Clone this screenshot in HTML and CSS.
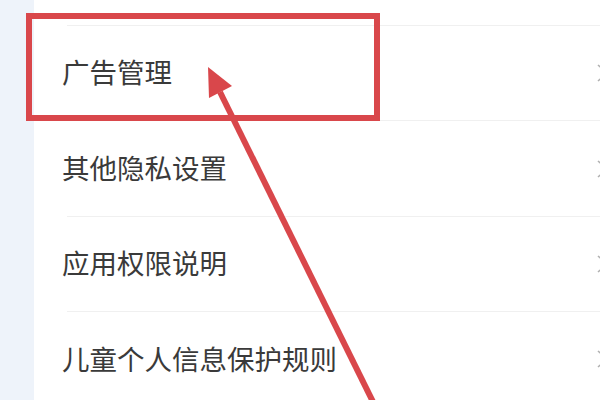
FILE: index.html
```html
<!DOCTYPE html>
<html lang="zh-CN">
<head>
    <meta charset="UTF-8">
    <meta name="viewport" content="width=device-width, initial-scale=1.0">
    <title>隐私设置</title>
    <link rel="stylesheet" href="styles.css">
</head>
<body>
    <div class="page">
        <div class="sideStrip"></div>
        <div class="settingsList">
            <div class="row">
                <span class="rowLabel">广告管理</span>
                <svg class="chevron" width="14" height="20" viewBox="0 0 14 20"><path d="M2 2 L11 10 L2 18" fill="none" stroke="#b0b0b0" stroke-width="1.6"/></svg>
            </div>
            <div class="row">
                <span class="rowLabel">其他隐私设置</span>
                <svg class="chevron" width="14" height="20" viewBox="0 0 14 20"><path d="M2 2 L11 10 L2 18" fill="none" stroke="#b0b0b0" stroke-width="1.6"/></svg>
            </div>
            <div class="row">
                <span class="rowLabel">应用权限说明</span>
                <svg class="chevron" width="14" height="20" viewBox="0 0 14 20"><path d="M2 2 L11 10 L2 18" fill="none" stroke="#b0b0b0" stroke-width="1.6"/></svg>
            </div>
            <div class="row">
                <span class="rowLabel">儿童个人信息保护规则</span>
                <svg class="chevron" width="14" height="20" viewBox="0 0 14 20"><path d="M2 2 L11 10 L2 18" fill="none" stroke="#b0b0b0" stroke-width="1.6"/></svg>
            </div>
        </div>

        <!-- annotation drawn over the screenshot -->
        <div class="highlightBox"></div>
        <svg class="arrow" width="600" height="400" viewBox="0 0 600 400">
            <line x1="220" y1="92" x2="378" y2="412" stroke="#d9474b" stroke-width="6"/>
            <polygon points="208,67 232,86 209,98" fill="#d9474b"/>
        </svg>
    </div>
</body>
</html>
```

FILE: styles.css
```css
body {
    margin: 0;
    background-color: #ffffff;
    font-family: "Noto Sans CJK SC", "Noto Sans", sans-serif;
    color: #3a3a3a;
    overflow: hidden;
}

.page {
    position: relative;
    display: flex;
    width: 600px;
    height: 400px;
    overflow: hidden;
}

.sideStrip {
    width: 34px;
    background-color: #eef3fa;
    flex-shrink: 0;
}

.settingsList {
    flex: 1;
    padding-top: 25px;
}

.row {
    box-sizing: border-box;
    height: 95.4px;
    margin-left: 33px;
    border-top: 1px solid #f0f0f0;
    display: flex;
    align-items: center;
    justify-content: space-between;
}

.rowLabel {
    margin-left: -5px;
    font-size: 27.5px;
    line-height: 1;
    margin-top: -2px;
}

.chevron {
    margin-right: -10px;
}

.highlightBox {
    position: absolute;
    left: 26px;
    top: 13px;
    width: 342px;
    height: 96px;
    border: 6.5px solid #d9474b;
}

.arrow {
    position: absolute;
    left: 0;
    top: 0;
}
```
